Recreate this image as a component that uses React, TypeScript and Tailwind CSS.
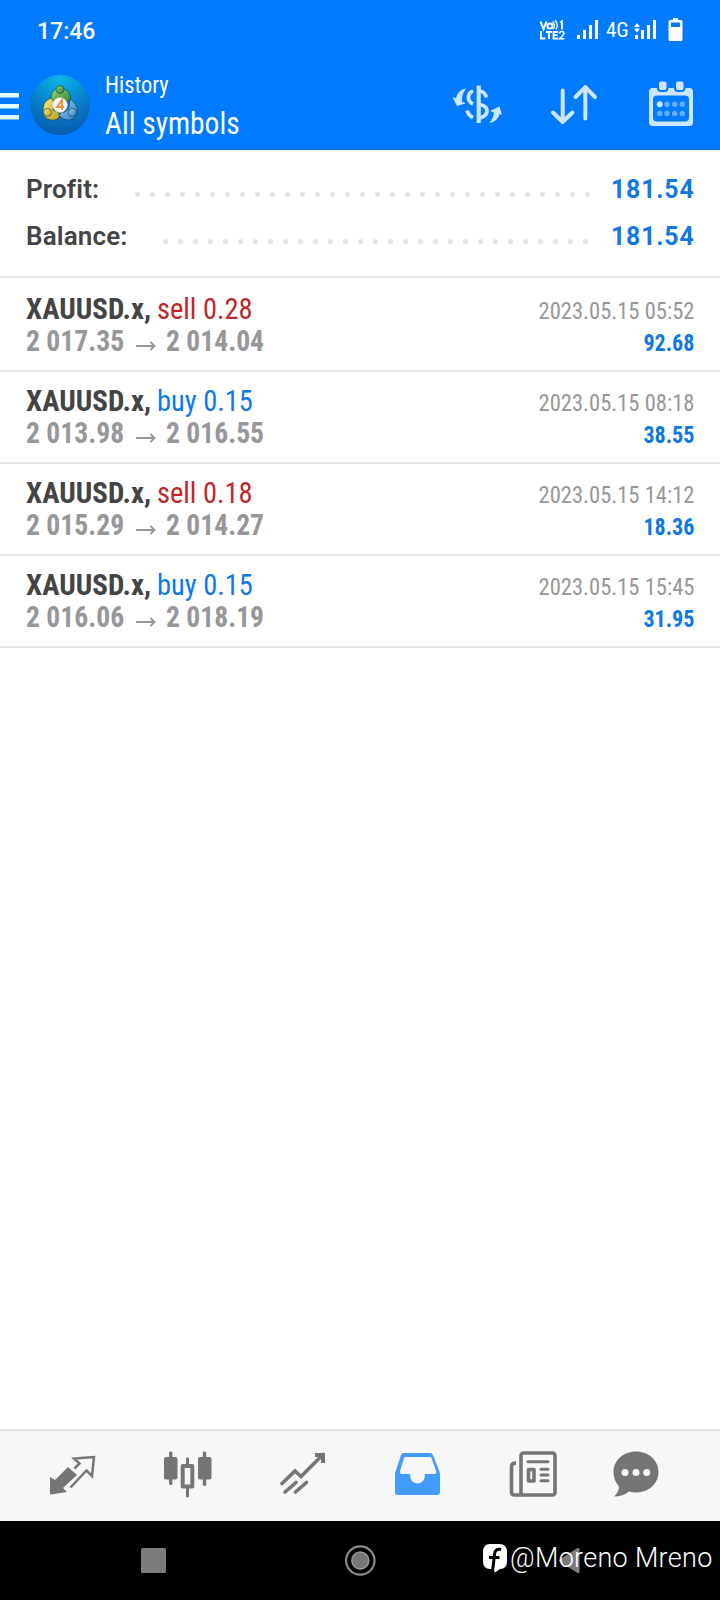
import React from "react";

type Trade = {
  side: "buy" | "sell";
  volume: string;
  open: string;
  close: string;
  time: string;
  profit: string;
};

const trades: Trade[] = [
  { side: "sell", volume: "0.28", open: "2 017.35", close: "2 014.04", time: "2023.05.15 05:52", profit: "92.68" },
  { side: "buy", volume: "0.15", open: "2 013.98", close: "2 016.55", time: "2023.05.15 08:18", profit: "38.55" },
  { side: "sell", volume: "0.18", open: "2 015.29", close: "2 014.27", time: "2023.05.15 14:12", profit: "18.36" },
  { side: "buy", volume: "0.15", open: "2 016.06", close: "2 018.19", time: "2023.05.15 15:45", profit: "31.95" },
];

const condensed = "font-['Roboto_Condensed','Roboto',sans-serif] [font-stretch:75%]";

function StatusBar() {
  return (
    <div className="flex h-[60px] items-center justify-between pl-[37px] pr-[34px] text-white">
      <span className="pt-[3px] text-[23px] font-medium leading-[30px]">17:46</span>
      <div className="flex items-center">
        <svg width="28" height="24" viewBox="538 18 28 24" fill="none" stroke="#fff" strokeWidth="2">
          <path d="M540.5 21.5l3 7.500 3-7.500" />
          <circle cx="550" cy="26" r="2.600" />
          <path d="M552.500 21.500q3.500 3.500 1 7.500M555 20q4 5 1 9.500" strokeWidth="1.300" />
          <path d="M560 22.200l2-1V29.500M541 31v7.500h4.500M546 32h6M549 32v7M558 32h-4.500v6.500h4.500M553.500 35.200h4" strokeWidth="1.800" />
          <path d="M559.500 33.500q0-2 2.200-2t2.200 2q0 1.300-4.200 5.200h4.600" strokeWidth="1.600" />
        </svg>
        <svg className="ml-[11px]" width="22" height="24" viewBox="577 18 22 24" fill="#fff">
          <path d="M577 35h3v4h-3zM583 30h3v9h-3zM589 25h3v14h-3zM595 20h3v19h-3z" />
        </svg>
        <span className={`${condensed} ml-[7px] w-[22px] whitespace-nowrap text-[21px] leading-[30px]`}>4G</span>
        <svg className="ml-[6px]" width="22" height="24" viewBox="634 18 22 24" fill="#fff">
          <path d="M634 27l3-4 3 4zM634 28.500h6l-3 4zM635 35h3v4h-3zM641 30h3v9h-3zM647 25h3v14h-3zM653 20h3v19h-3z" />
        </svg>
        <svg className="ml-[12px]" width="18" height="24" viewBox="668 18 18 24" fill="#fff" fillRule="evenodd">
          <path d="M673 18h5v2h3q1.500 0 1.500 1.500v18q0 1.500-1.500 1.500h-11q-1.500 0-1.500-1.500v-18q0-1.500 1.500-1.500h3zM671 22.500v4.500h9v-4.500z" />
        </svg>
      </div>
    </div>
  );
}

function AppLogo() {
  return (
    <svg className="ml-[11px]" width="60" height="60" viewBox="30 75 60 60">
      <defs>
        <radialGradient id="disc" cx="0.5" cy="0.05" r="0.95">
          <stop offset="0" stopColor="#0cb8e8" />
          <stop offset="0.55" stopColor="#077fcc" />
          <stop offset="1" stopColor="#075cae" />
        </radialGradient>
        <linearGradient id="green" x1="0" y1="0" x2="1" y2="1">
          <stop offset="0" stopColor="#9bd87a" />
          <stop offset="1" stopColor="#2a8433" />
        </linearGradient>
        <linearGradient id="gold" x1="0" y1="0" x2="1" y2="1">
          <stop offset="0" stopColor="#fbee80" />
          <stop offset="1" stopColor="#bb9c20" />
        </linearGradient>
        <linearGradient id="sky" x1="0" y1="0" x2="1" y2="1">
          <stop offset="0" stopColor="#a0d8fa" />
          <stop offset="1" stopColor="#2275c0" />
        </linearGradient>
      </defs>
      <circle cx="60" cy="105" r="30" fill="url(#disc)" />
      <g stroke="#0f3a44" strokeOpacity="0.7" strokeWidth="0.9">
        <path d="M56 89q-6 3-5 11l5 2q4-3 8 0l6-1q2-9-6-12z" fill="url(#green)" />
        <path d="M51 98q-8 3-8 12 0 9 8 10 6 1 9-4l-2-4-5-2 1-8z" fill="url(#gold)" />
        <path d="M70 99q8 5 7.500 13-2 8-8.500 8-7 0-10-5l3-3q5 1 7-5z" fill="url(#sky)" />
        <circle cx="60" cy="89.500" r="4" fill="url(#green)" />
        <circle cx="47.500" cy="112.500" r="4" fill="url(#gold)" />
        <circle cx="72.500" cy="112.500" r="4" fill="url(#sky)" />
      </g>
      <circle cx="60" cy="105" r="7.400" fill="#fbf7f2" stroke="#c8c8b8" strokeWidth="0.5" />
      <path d="M62 110v-10l-5 7h7" fill="none" stroke="#f08a3c" strokeWidth="1.800" />
    </svg>
  );
}

function Header() {
  return (
    <header className="h-[150px] border-b border-[#1565b8] bg-[#007aff]">
      <StatusBar />
      <div className="flex h-[90px] items-center text-white">
        <svg width="19" height="30" viewBox="0 90 19 30" fill="#e2fbff">
          <path d="M0 93h19v4.500H0zM0 104h19v4.500H0zM0 115h19v4.500H0z" />
        </svg>
        <AppLogo />
        <div className={`${condensed} ml-[15px] flex-1 origin-left scale-x-[0.92] whitespace-nowrap pt-[3px]`}>
          <div className="text-[24.500px] leading-[32px]">History</div>
          <div className="text-[32px] leading-[44px]">All symbols</div>
        </div>
        <svg width="52" height="46" viewBox="451 82 52 46" fill="none" stroke="#cce6ff" strokeWidth="3.800">
          <path d="M478.700 85.500v37.500" strokeWidth="4.200" />
          <path d="M473 91q-4.500 1.500-4.500 6.500 0 4.500 4.500 6.500M467 110.500q1.500 5 6 7M480 91q5 1 6.500 6.500M480 104.500q7 1.500 7 6.500t-7 7" />
          <path fill="#cce6ff" stroke="none" d="M466 88.500q-8 1-10 9.500l-3.500-.5 4.500 8.500 8.500-2.500-3.500-2q-.5-7 4-13zM489 123q9-1.500 10.500-9l2.500 1-2.500-8.500-9.500 4.500 4 1.500q-.5 6-5 10.500z" />
        </svg>
        <svg className="ml-[47px]" width="48" height="46" viewBox="550 82 48 46" fill="none" stroke="#cce6ff" strokeWidth="4" strokeLinecap="round" strokeLinejoin="round">
          <path d="M562.700 90.500v31.500M553 112.500l9.700 9.500 9.700-9.500M585.300 118.500V87M575.500 97l9.800-9.800 9.700 9.800" />
        </svg>
        <svg className="ml-[50px] mr-[26px]" width="46" height="46" viewBox="648 82 46 46" overflow="visible">
          <path fillRule="evenodd" fill="#cce6ff" d="M652.500 88h37q3.500 0 3.500 3.500v31q0 3.500-3.500 3.500h-37q-3.500 0-3.500-3.500v-31q0-3.500 3.500-3.500zM657 95.500q-4 0-4 4v18q0 4 4 4h28q4 0 4-4v-18q0-4-4-4z" />
          <rect x="658" y="80.500" width="9.500" height="10.500" rx="3" fill="#cce6ff" stroke="#007aff" strokeWidth="2" />
          <rect x="675" y="80.500" width="9.500" height="10.500" rx="3" fill="#cce6ff" stroke="#007aff" strokeWidth="2" />
          <circle cx="659.700" cy="104.200" r="3" fill="#cce6ff" />
          <g fill="#66afff">
            <circle cx="667" cy="104.200" r="2.700" />
            <circle cx="674.700" cy="104.200" r="2.700" />
            <circle cx="682.300" cy="104.200" r="2.700" />
            <circle cx="659.700" cy="113.500" r="2.700" />
            <circle cx="667" cy="113.500" r="2.700" />
            <circle cx="674.700" cy="113.500" r="2.700" />
            <circle cx="682.300" cy="113.500" r="2.700" />
          </g>
        </svg>
      </div>
    </header>
  );
}

function SummaryRow({ label, value, dots, labelClass }: { label: string; value: string; dots: number; labelClass: string }) {
  return (
    <div className="flex h-[47px] items-center text-[26px] font-bold leading-[47px]">
      <span className={`${labelClass} whitespace-nowrap font-semibold tracking-[0.15px] text-[#444]`}>{label}</span>
      <div className="mt-[9px] flex flex-1 gap-[10px]">
        {Array.from({ length: dots }, (_, i) => (
          <span key={i} className="size-[5px] shrink-0 rounded-full bg-[#e3e3e3]" />
        ))}
      </div>
      <span className="-mr-px origin-right scale-x-[0.955] whitespace-nowrap tracking-[0.9px] text-[#0f78e2]">{value}</span>
    </div>
  );
}

function TradeRow({ trade, first }: { trade: Trade; first: boolean }) {
  return (
    <div className={`${condensed} ${first ? "pt-[15px]" : "pt-[13px]"} flex justify-between whitespace-nowrap border-b-2 border-[#e3e3e3] pb-[13px] pl-[26px] pr-[26px]`}>
      <div className="text-[30px] leading-[32px]">
        <div className="flex h-[32px]">
          <span className="w-[131px] origin-left scale-x-[0.965] font-bold text-[#444]">XAUUSD.x,</span>
          <span className={`${trade.side === "sell" ? "text-[#bf2828]" : "text-[#0f78e2]"} origin-left scale-x-[0.948]`}>
            {trade.side} {trade.volume}
          </span>
        </div>
        <div className="flex h-[32px] items-center font-bold text-[#97979a]">
          <span className="w-[98px] origin-left scale-x-[0.922]">{trade.open}</span>
          <svg className="ml-[12px] mr-[10px] mt-[10px]" width="20" height="12" viewBox="0 0 20 12" fill="none" stroke="#97979a" strokeWidth="1.900">
            <path d="M0 6h18M14.500 2l4 4-4 4" />
          </svg>
          <span className="w-[98px] origin-left scale-x-[0.92]">{trade.close}</span>
        </div>
      </div>
      <div className="text-right text-[24.500px] leading-[32px]">
        <div className="h-[32px] origin-right scale-x-[0.92] pt-[2px] text-[#97979a]">{trade.time}</div>
        <div className="h-[32px] origin-right scale-x-[0.9] pt-[2px] font-bold text-[#0f78e2]">{trade.profit}</div>
      </div>
    </div>
  );
}

function TabBar() {
  return (
    <nav className="flex h-[92px] items-start border-t-2 border-[#e3e3e3] bg-[#f7f7f7] pt-[19px]">
      <svg className="ml-[48px]" width="50" height="50" viewBox="48 1450 50 50" fill="none" stroke="#757575" strokeWidth="2.500">
        <path fill="#757575" stroke="none" d="M50 1477l5 3 13-13 9 8-14 13 4 4-16 2.500q-1 0-1-1z" />
        <path d="M74.500 1468.500l5-5-5.500-5 20-1.500-2 19-5.500-5.500-16 17" />
      </svg>
      <svg className="ml-[64px]" width="52" height="50" viewBox="162 1450 52 50">
        <g fill="#757575">
          <rect x="164" y="1457" width="13.500" height="22.500" rx="2" />
          <rect x="198" y="1457" width="13.500" height="22.500" rx="2" />
          <path d="M169 1452.500q0-1 1.700-1t1.700 1v31.500q0 1-1.700 1t-1.700-1zM202.800 1452.500q0-1 1.700-1t1.700 1v32.500q0 1-1.700 1t-1.700-1zM186 1458.500q0-1 1.500-1t1.500 1v6.500h-3zM186 1487h3v9.500q0 1-1.500 1t-1.500-1z" />
        </g>
        <rect x="182.700" y="1466" width="9.600" height="20.500" fill="none" stroke="#757575" strokeWidth="4" strokeLinejoin="round" />
      </svg>
      <svg className="ml-[64px]" width="50" height="50" viewBox="278 1450 50 50" fill="none" stroke="#757575" strokeWidth="3.600" strokeLinecap="round">
        <path d="M282 1483.500l13-12.500 6 5.500 22-22M285 1492l11-9.500M295.500 1492l11-9.500" />
        <path d="M315 1455h8v8" strokeLinecap="butt" strokeWidth="4" />
      </svg>
      <svg className="ml-[64px]" width="50" height="50" viewBox="392 1450 50 50">
        <path fillRule="evenodd" fill="#429cff" d="M404 1453h26q2 0 3 2l7 18v19q0 3-3 3h-39q-3 0-3-3v-19l6-18q1-2 3-2zM405.500 1457q-1 0-1.500 1l-4 13q-.5 3 2 3h8q0 9 7.500 9.500 7.500-.5 7.500-9.500h9q3 0 2-3l-4.500-13q-.5-1-1.500-1z" />
      </svg>
      <svg className="ml-[64px]" width="54" height="50" viewBox="506 1450 54 50" fill="none" stroke="#757575" strokeWidth="3.600">
        <rect x="521" y="1453" width="34" height="42" rx="2.500" />
        <path d="M516 1463q-4.500 0-4.500 3.500v25.500q0 3 3 3h9" />
        <g strokeLinecap="round" strokeWidth="3">
          <path d="M528 1461.700h20M541 1469.200h7M541 1475h7M541 1480.700h7" />
        </g>
        <rect x="528.500" y="1469.500" width="5.500" height="11.500" strokeLinejoin="round" />
      </svg>
      <svg className="ml-[52px]" width="48" height="50" viewBox="612 1450 48 50">
        <path fill="#757575" d="M636 1451.500c13 0 22.500 9 22.500 20.500s-9.500 20.500-22.500 20.500q-4 0-7-1-6 5-15 5 5-4 5-10-5.500-6-5.500-14.500c0-11.500 9.500-20.500 22.500-20.500z" />
        <g fill="#f7f7f7">
          <circle cx="625" cy="1472.500" r="3.500" />
          <circle cx="636" cy="1472.500" r="3.500" />
          <circle cx="646.700" cy="1472.500" r="3.500" />
        </g>
      </svg>
    </nav>
  );
}

function SystemNav() {
  return (
    <div className="relative flex h-[79px] items-start bg-black pt-[24px]">
      <svg className="ml-[140px]" width="26" height="30" viewBox="140 1545 26 30">
        <rect x="141" y="1548" width="25" height="25" rx="1.500" fill="#7c7c7c" />
      </svg>
      <svg className="ml-[178px]" width="32" height="32" viewBox="344 1545 32 32">
        <circle cx="360.300" cy="1560.500" r="14.200" fill="none" stroke="#8a8a8a" strokeWidth="2.200" />
        <circle cx="360.300" cy="1560.500" r="8.500" fill="#777" stroke="#999" strokeWidth="1.500" />
      </svg>
      <svg className="ml-[182px]" width="24" height="30" viewBox="558 1545 24 30">
        <path d="M559.500 1559.500q-1 1 0 2l18 11.500q2 .5 2-1v-23q0-1.500-2-1z" fill="#7c7c7c" />
      </svg>
      <div className="absolute left-[482px] top-[20px] flex items-center whitespace-nowrap text-white">
        <svg width="26" height="30" viewBox="482 1543 26 30">
          <path fill="#fff" d="M490 1544h9q8 0 8 8v9q0 8-7 8l-5 3.500-2-3.500h-3q-7 0-7-8v-9q0-8 7-8z" />
          <path d="M501 1549.500q-6-1.500-6.500 5l-2 17M489 1557.500h10.500" fill="none" stroke="#000" strokeWidth="3" />
        </svg>
        <span className="ml-[2px] pt-px text-[27px] font-[350] leading-[32px] tracking-[0.3px]">@Moreno Mreno</span>
      </div>
    </div>
  );
}

export default function App() {
  return (
    <div className="flex h-[1600px] w-[720px] flex-col overflow-hidden bg-white font-['Roboto',sans-serif]">
      <Header />
      <section className="h-[128px] border-b-2 border-[#e3e3e3] pl-[26px] pr-[26px] pt-[16px]">
        <SummaryRow label="Profit:" value="181.54" dots={31} labelClass="w-[109px]" />
        <SummaryRow label="Balance:" value="181.54" dots={29} labelClass="w-[137px]" />
      </section>
      <main className="flex-1">
        {trades.map((t, i) => (
          <TradeRow key={t.time} trade={t} first={i === 0} />
        ))}
      </main>
      <TabBar />
      <SystemNav />
    </div>
  );
}
